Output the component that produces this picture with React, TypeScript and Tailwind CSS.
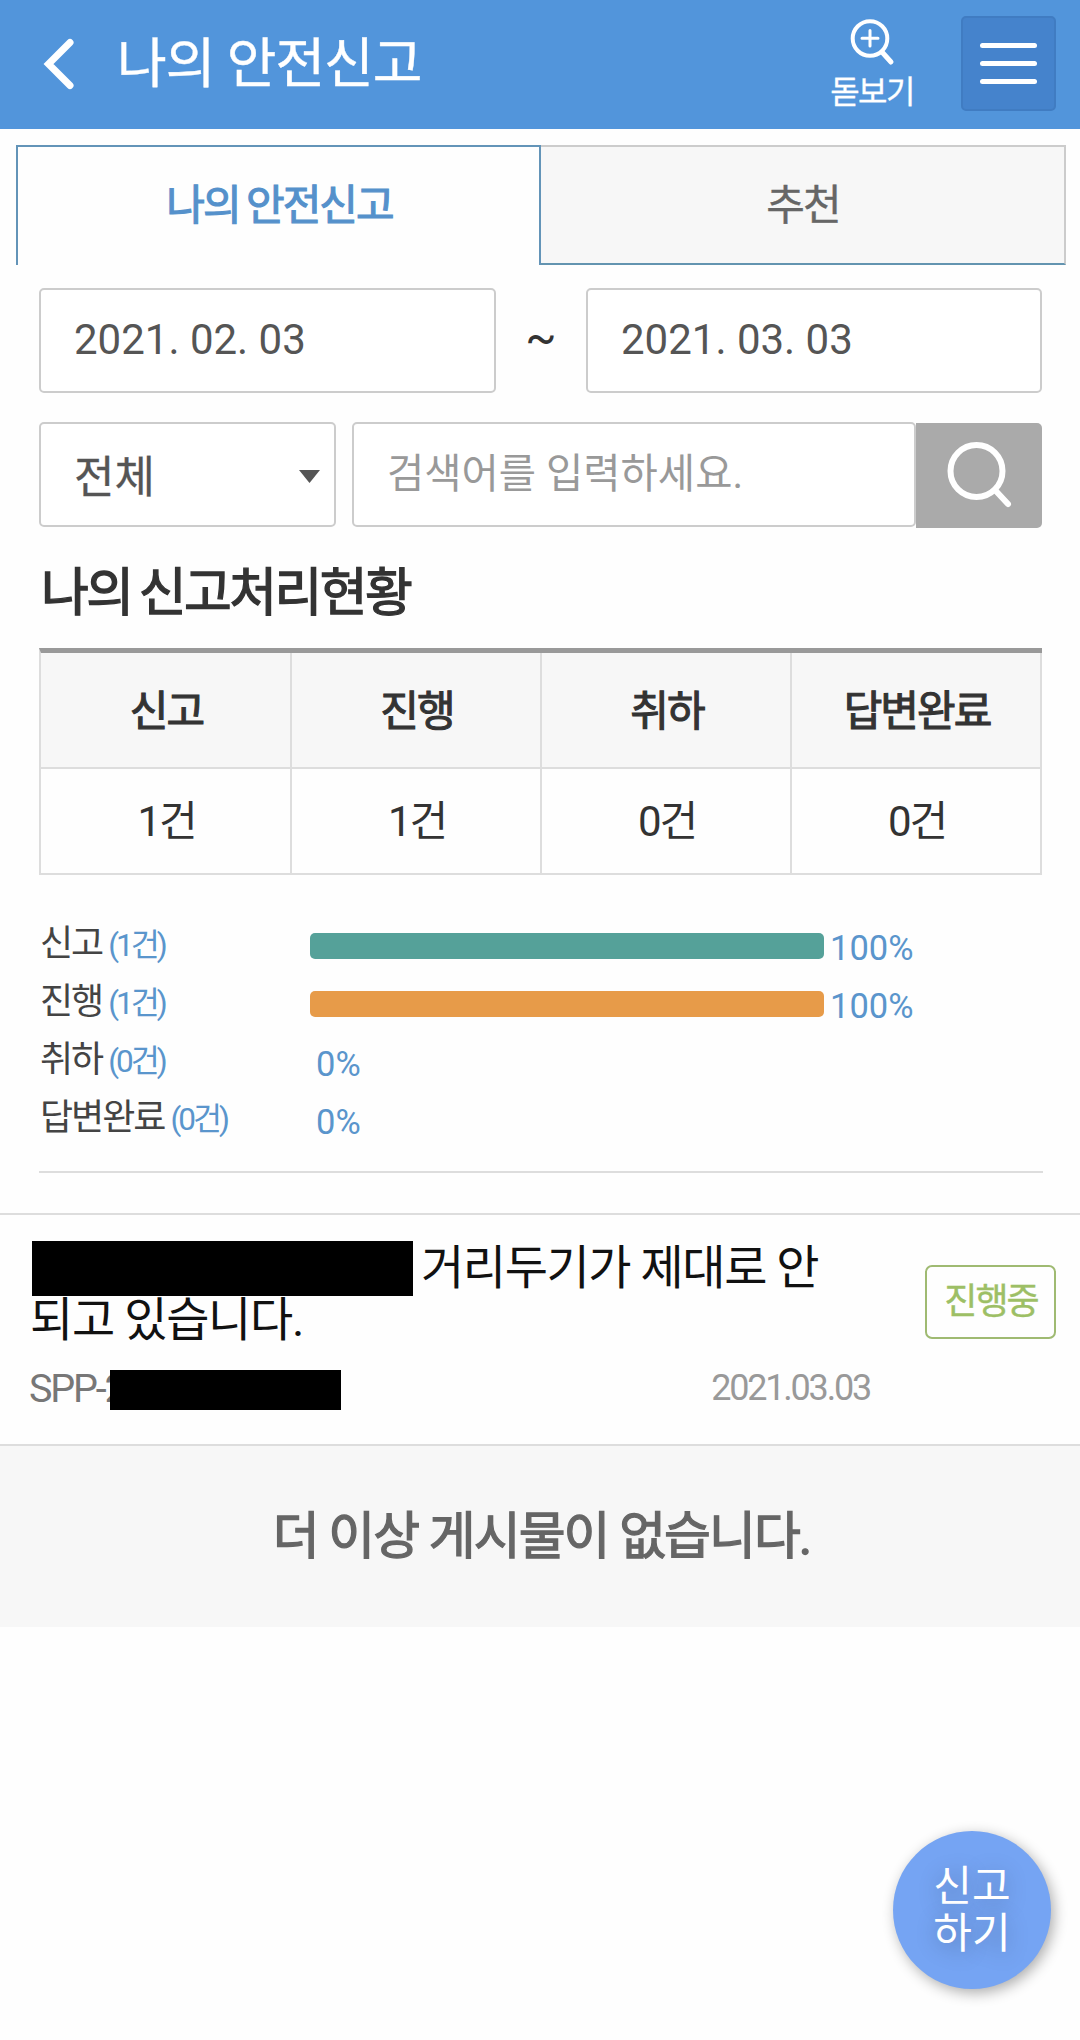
import React from "react";

const summary = [
  { label: "신고", count: 1, percent: 100, bar: "bg-[#55a199]" },
  { label: "진행", count: 1, percent: 100, bar: "bg-[#e79b49]" },
  { label: "취하", count: 0, percent: 0, bar: "bg-[#8a8a8a]" },
  { label: "답변완료", count: 0, percent: 0, bar: "bg-[#5295db]" },
];

function Header() {
  return (
    <header className="flex h-[129px] items-start bg-[#5295db] text-white">
      <svg className="ml-[38px] mt-[36px] h-[56px] w-[36px] shrink-0" viewBox="0 0 36 56" fill="none" stroke="#fff" strokeWidth="7">
        <path d="M32 6.500 10.500 28 32 49.500" strokeLinejoin="miter" strokeLinecap="round" />
      </svg>
      <h1 className="ml-[43px] mt-[35px] w-[700px] shrink-0 text-[54px] leading-[60px] tracking-[-1px] [-webkit-text-stroke:0.400px_#fff]">나의 안전신고</h1>
      <div className="mt-[17px] flex w-[110px] shrink-0 flex-col items-center">
        <svg className="h-[50px] w-[46px]" viewBox="0 0 46 50" fill="none" stroke="#fff" strokeLinecap="round">
          <circle cx="21" cy="21.500" r="17.300" strokeWidth="4" />
          <path d="M33 35 42 45" strokeWidth="5" />
          <path d="M21 13.500v15.500M13 21.300h16" strokeWidth="3" />
        </svg>
        <span className="mt-px text-[32px] leading-[48px] tracking-[-1.600px] [-webkit-text-stroke:0.300px_#fff]">돋보기</span>
      </div>
      <button className="ml-[34px] mt-[16px] flex h-[95px] w-[95px] shrink-0 flex-col items-center justify-center gap-[13px] rounded-[5px] border-2 border-[#407cc2] bg-[#4583cc]">
        <span className="h-[5px] w-[57px] rounded-full bg-white" />
        <span className="h-[5px] w-[57px] rounded-full bg-white" />
        <span className="h-[5px] w-[57px] rounded-full bg-white" />
      </button>
    </header>
  );
}

function Tabs() {
  return (
    <nav className="ml-[16px] mr-[14px] mt-[16px] flex h-[120px] text-center text-[42px] leading-[118px] tracking-[-2px]">
      <div className="w-[525px] border-2 border-b-0 border-[#6394b8] pl-[2px] text-[#5591cb] [-webkit-text-stroke:1.100px_#5591cb] [word-spacing:-2px]">나의 안전신고</div>
      <div className="flex-1 border-2 border-l-0 border-[#ccc] border-b-[#6394b0] bg-[#f7f7f7] pl-px text-[#666] [-webkit-text-stroke:0.400px_#666]">추천</div>
    </nav>
  );
}

function Filters() {
  const box = "rounded-[5px] border-2 border-[#ccc] bg-white";
  return (
    <section className="ml-[39px] mt-[23px] w-[1003px]">
      <div className="flex h-[105px] text-[42px] leading-[99px] text-[#555]">
        <div className={box + " w-[457px] pl-[33px]"}>2021. 02. 03</div>
        <div className="flex-1 text-center text-[46px] text-[#333]">~</div>
        <div className={box + " w-[456px] pl-[33px]"}>2021. 03. 03</div>
      </div>
      <div className="mt-[29px] flex h-[106px] items-start">
        <div className={box + " flex h-[105px] w-[297px] items-center justify-between pl-[33px] pr-[14px] text-[44px] text-[#555]"}>
          <span className="pt-[7px] leading-[94px] [-webkit-text-stroke:0.300px_#555]">전체</span>
          <svg className="mt-[3px] h-[13px] w-[21px]" viewBox="0 0 21 13"><path d="M0 0h21L10.500 13z" fill="#555" /></svg>
        </div>
        <div className={box + " ml-[16px] h-[105px] w-[564px] pl-[33px] text-[40.500px] leading-[101px] text-[#999]"}>검색어를 입력하세요.</div>
        <button className="mt-px h-[105px] flex-1 rounded-r-[5px] bg-[#aaa]">
          <svg className="ml-[29px] h-[72px] w-[72px]" viewBox="0 0 72 72" fill="none" stroke="#fff" strokeLinecap="round" strokeWidth="6">
            <circle cx="31.500" cy="31" r="26" />
            <path d="M50 50 63 64" />
          </svg>
        </button>
      </div>
    </section>
  );
}

function StatusTable() {
  return (
    <div className="grid h-[227px] grid-cols-[251px_250px_250px_250px] grid-rows-[116px_106px] border-l-2 border-t-[5px] border-l-[#ddd] border-t-[#999] text-center text-[42px] tracking-[-2px] text-[#333]">
      {summary.map((s) => (
        <div key={s.label} className="border-b-2 border-r-2 border-[#ddd] bg-[#f7f7f7] pl-[2px] leading-[118px] [-webkit-text-stroke:1.100px_#333]">{s.label}</div>
      ))}
      {summary.map((s) => (
        <div key={s.label} className="border-b-2 border-r-2 border-[#ddd] pl-[2px] leading-[105px]">{s.count}건</div>
      ))}
    </div>
  );
}

function Chart() {
  return (
    <ul className="mt-[42px] h-[256px] w-[1004px] border-b-2 border-[#ddd]">
      {summary.map((s) => (
        <li key={s.label} className="flex h-[58px] items-start">
          <div className="w-[271px] whitespace-nowrap pl-px text-[36px] leading-[54px] tracking-[-2px] text-[#444]">
            {s.label}
            <span className="ml-[6px] text-[31.500px] tracking-[-3px] text-[#5a95cc]">({s.count}건)</span>
          </div>
          <div className="mt-[16px] h-[26px] rounded-[5px]" style={{ width: s.percent * 5.14 }}>
            <div className={s.bar + " h-full rounded-[5px]"} />
          </div>
          <span className="ml-[6px] mt-[5px] text-[34.500px] leading-[53px] text-[#5a95cc]">{s.percent}%</span>
        </li>
      ))}
    </ul>
  );
}

function ReportItem() {
  return (
    <article className="mt-[40px] flex h-[233px] items-start border-y-2 border-[#ddd]">
      <div className="ml-[29px] w-[841px] shrink-0">
        <div className="mt-[26px] flex h-[52px]">
          <span className="ml-[3px] h-[55px] w-[381px] shrink-0 bg-black" />
          <span className="ml-[8px] whitespace-nowrap text-[47px] leading-[54px] tracking-[-1.400px] text-[#111]">거리두기가 제대로 안</span>
        </div>
        <div className="ml-px text-[47px] leading-[53px] tracking-[-1.300px] text-[#111]">되고 있습니다.</div>
        <div className="mt-[24px] flex h-[40px] items-start">
          <span className="w-[81px] whitespace-nowrap text-[39.500px] leading-[38px] tracking-[-2.200px] text-[#777]">SPP-2</span>
          <span className="relative h-[40px] w-[231px] bg-black" />
          <span className="ml-auto text-[36px] leading-[36px] tracking-[-2.200px] text-[#999]">2021.03.03</span>
        </div>
      </div>
      <span className="ml-[55px] mt-[50px] h-[74px] w-[131px] rounded-[7px] border-2 border-[#9fba72] pl-px text-center text-[36px] leading-[71px] tracking-[-2px] text-[#9dbf65] [-webkit-text-stroke:0.400px_#9dbf65]">진행중</span>
    </article>
  );
}

export default function App() {
  return (
    <div className="relative h-[2040px] w-[1080px] overflow-hidden bg-[#fefefe] font-['Roboto','Noto_Sans_CJK_KR',sans-serif]">
      <Header />
      <Tabs />
      <Filters />
      <section className="ml-[39px] w-[1003px]">
        <h2 className="mb-[24px] mt-[35px] pl-[2px] text-[52px] leading-[61px] tracking-[-2.600px] text-[#333] [-webkit-text-stroke:1.300px_#333] [word-spacing:-3px]">나의 신고처리현황</h2>
        <StatusTable />
        <Chart />
      </section>
      <ReportItem />
      <div className="h-[181px] bg-[#f7f7f7] pl-[3px] text-center text-[51px] leading-[181px] tracking-[-2px] text-[#666] [-webkit-text-stroke:1.300px_#666]">더 이상 게시물이 없습니다.</div>
      <button className="absolute left-[893px] top-[1831px] flex h-[158px] w-[158px] flex-col items-center justify-center rounded-full bg-[#75a4f3] text-[42px] leading-[47px] text-white shadow-[3px_4px_14px_rgba(0,0,0,0.32)] [text-shadow:0_4px_22px_rgba(0,0,0,0.3)]">
        <span>신고</span>
        <span>하기</span>
      </button>
    </div>
  );
}
